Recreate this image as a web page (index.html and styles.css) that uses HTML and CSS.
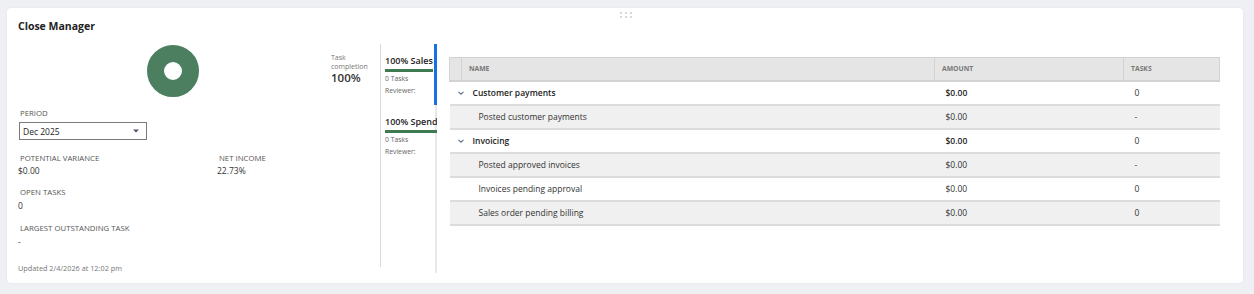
FILE: index.html
```html
<!DOCTYPE html>
<html>
<head>
<meta charset="utf-8">
<link rel="stylesheet" href="styles.css">
</head>
<body>
<div class="card">
  <div class="grip"><i></i><i></i><i></i><i></i><i></i><i></i></div>
  <div class="card-head">Close Manager</div>
  <div class="card-body">
    <div class="left">
      <div class="donut-wrap">
        <svg width="52" height="52" viewBox="0 0 52 52"><circle cx="26" cy="26" r="17.5" fill="none" stroke="#4b7f5f" stroke-width="17"/></svg>
      </div>
      <div class="lbl period-lbl">PERIOD</div>
      <div class="select"><span>Dec 2025</span><svg class="caret" width="6" height="4" viewBox="0 0 6 4"><path d="M0 0.5h6L3 3.5z" fill="#4a5568"/></svg></div>
      <div class="metrics">
        <div class="metric">
          <div class="lbl">POTENTIAL VARIANCE</div>
          <div class="val">$0.00</div>
        </div>
        <div class="metric">
          <div class="lbl">NET INCOME</div>
          <div class="val">22.73%</div>
        </div>
      </div>
      <div class="metric solo">
        <div class="lbl">OPEN TASKS</div>
        <div class="val tall">0</div>
      </div>
      <div class="metric solo">
        <div class="lbl">LARGEST OUTSTANDING TASK</div>
        <div class="val tall">-</div>
      </div>
      <div class="updated">Updated 2/4/2026 at 12:02 pm</div>
    </div>
    <div class="completion">
      <div class="comp-lbl">Task<br>completion</div>
      <div class="comp-val">100%</div>
    </div>
    <div class="tracks">
      <div class="track active">
        <div class="track-title">100% Sales</div>
        <div class="track-bar"></div>
        <div class="track-sub">0 Tasks</div>
        <div class="track-sub">Reviewer:</div>
      </div>
      <div class="track">
        <div class="track-title">100% Spend</div>
        <div class="track-bar"></div>
        <div class="track-sub">0 Tasks</div>
        <div class="track-sub">Reviewer:</div>
      </div>
    </div>
    <div class="table-wrap">
      <table class="grid">
        <thead>
          <tr><th class="c0"></th><th class="c1">NAME</th><th class="c2">AMOUNT</th><th class="c3">TASKS</th></tr>
        </thead>
        <tbody>
          <tr class="group">
            <td class="c0 chev"><svg width="6" height="4" viewBox="0 0 6 4"><path d="M0.5 0.8L3 3.2 5.5 0.8" fill="none" stroke="#5d6f88" stroke-width="1.1"/></svg></td>
            <td class="c1">Customer payments</td><td class="c2">$0.00</td><td class="c3">0</td>
          </tr>
          <tr class="child shade">
            <td class="c0"></td><td class="c1">Posted customer payments</td><td class="c2">$0.00</td><td class="c3">-</td>
          </tr>
          <tr class="group">
            <td class="c0 chev"><svg width="6" height="4" viewBox="0 0 6 4"><path d="M0.5 0.8L3 3.2 5.5 0.8" fill="none" stroke="#5d6f88" stroke-width="1.1"/></svg></td>
            <td class="c1">Invoicing</td><td class="c2">$0.00</td><td class="c3">0</td>
          </tr>
          <tr class="child shade">
            <td class="c0"></td><td class="c1">Posted approved invoices</td><td class="c2">$0.00</td><td class="c3">-</td>
          </tr>
          <tr class="child">
            <td class="c0"></td><td class="c1">Invoices pending approval</td><td class="c2">$0.00</td><td class="c3">0</td>
          </tr>
          <tr class="child shade">
            <td class="c0"></td><td class="c1">Sales order pending billing</td><td class="c2">$0.00</td><td class="c3">0</td>
          </tr>
        </tbody>
      </table>
    </div>
  </div>
</div>
</body>
</html>
```

FILE: styles.css
```css
* { box-sizing: border-box; }
html, body { margin: 0; padding: 0; }
body {
  background: #eef0f3;
  font-family: "Open Sans", "Noto Sans", sans-serif;
  color: #333;
  width: 1254px;
  height: 294px;
  padding: 8px 11px 0 7px;
}
.card {
  position: relative;
  background: #fff;
  border-radius: 4px;
  height: 275px;
  box-shadow: 0 0 2px rgba(0,0,0,0.08);
}
.grip {
  position: absolute;
  left: 613px;
  top: 4px;
  display: grid;
  grid-template-columns: repeat(3, 2px);
  gap: 2px 3px;
}
.grip i { width: 2px; height: 2px; background: #d6d8dc; display: block; }
.card-head {
  padding: 10px 11px;
  font-size: 10.5px;
  font-weight: 700;
  line-height: 16px;
  color: #222;
  height: 36px;
}
.card-body {
  display: flex;
  height: 229px;
}
.left {
  width: 324px;
  padding-left: 11px;
  flex: none;
}
.donut-wrap {
  display: flex;
  justify-content: center;
  margin-top: 1px;
  height: 52px;
  padding-right: 3px;
}
.lbl {
  font-size: 7.8px;
  line-height: 12px;
  color: #555;
  padding-left: 2px;
}
.period-lbl { margin-top: 10px; }
.select {
  margin-top: 3px;
  margin-left: 1px;
  width: 128px;
  height: 18px;
  border: 1px solid #7a7a7a;
  display: flex;
  align-items: center;
  justify-content: space-between;
  padding: 0 7px 0 3px;
  font-size: 8.5px;
  color: #222;
}
.caret { display: block; width: 6px; height: 4px; flex: none; }
.metrics {
  display: grid;
  grid-template-columns: 199px 1fr;
  margin-top: 12px;
}
.val {
  font-size: 8.5px;
  line-height: 14px;
  color: #333;
}
.val.tall { line-height: 16px; }
.solo { margin-top: 8px; }
.updated {
  margin-top: 12px;
  font-size: 7.3px;
  line-height: 12px;
  color: #777;
}
.completion {
  width: 50px;
  flex: none;
  border-right: 1px solid #d9d9d9;
  height: 223px;
  padding-top: 9px;
}
.comp-lbl {
  font-size: 7px;
  line-height: 9px;
  color: #777;
}
.comp-val {
  font-size: 11.5px;
  line-height: 14px;
  color: #333;
  font-weight: 600;
}
.tracks {
  width: 56px;
  flex: none;
  padding-left: 4px;
  height: 229px;
  background: linear-gradient(#e6e8ed, #e6e8ed) right top / 2px 100% no-repeat;
  overflow: hidden;
}
.track {
  height: 61px;
  padding-top: 11px;
  white-space: nowrap;
  overflow: hidden;
}
.track.active {
  box-shadow: inset -3px 0 #1a6fe3;
  padding-right: 4px;
}
.track-title {
  font-size: 9px;
  font-weight: 600;
  line-height: 12px;
  color: #222;
}
.track-bar {
  margin-top: 2px;
  height: 3px;
  background: #3f7a50;
}
.track-sub {
  margin-top: 2px;
  font-size: 6.8px;
  line-height: 10px;
  color: #666;
}
.table-wrap {
  padding-left: 12px;
  padding-top: 13px;
}
.grid {
  border-collapse: collapse;
  width: 770px;
  table-layout: fixed;
}
.grid th {
  background: #e5e5e5;
  height: 23px;
  border: 1px solid #d2d2d2;
  border-bottom: 2px solid #d2d2d2;
  text-align: left;
  font-size: 6.8px;
  font-weight: 700;
  color: #777;
  padding: 0 0 0 7px;
}
.grid th.c0 { padding: 0; }
.c0 { width: 12px; }
.c1 { width: 473px; }
.c2 { width: 189px; }
.c3 { width: 96px; }
.grid td {
  height: 24px;
  border-bottom: 2px solid #dcdcdc;
  font-size: 8.5px;
  color: #333;
  padding: 0;
  vertical-align: middle;
}
.grid td.c1 { padding-left: 11px; }
.grid td.c2 { padding-left: 11px; }
.grid td.c3 { padding-left: 11px; }
.grid tr.child td.c1 { padding-left: 17px; }
.grid tr.group td.c1,
.grid tr.group td.c2 { font-weight: 600; color: #222; }
.grid tr.shade td { background: #f0f0f0; }
.chev svg { display: block; margin-left: 8px; }
```
